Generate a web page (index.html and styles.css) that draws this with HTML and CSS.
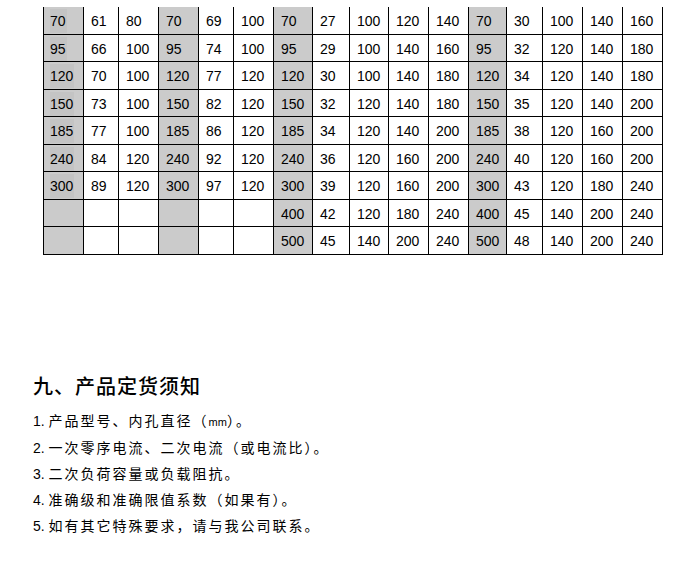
FILE: index.html
```html
<!DOCTYPE html>
<html lang="zh">
<head>
<meta charset="utf-8">
<title>产品定货须知</title>
<link rel="stylesheet" href="styles.css">
</head>
<body>
<div class="page">
  <div class="spec-table">
    <div class="cell key"><span class="mark">70</span></div><div class="cell">61</div><div class="cell">80</div><div class="cell key">70</div><div class="cell">69</div><div class="cell">100</div><div class="cell key">70</div><div class="cell">27</div><div class="cell">100</div><div class="cell">120</div><div class="cell">140</div><div class="cell key">70</div><div class="cell">30</div><div class="cell">100</div><div class="cell">140</div><div class="cell">160</div>
    <div class="cell key"><span class="mark">95</span></div><div class="cell">66</div><div class="cell">100</div><div class="cell key">95</div><div class="cell">74</div><div class="cell">100</div><div class="cell key">95</div><div class="cell">29</div><div class="cell">100</div><div class="cell">140</div><div class="cell">160</div><div class="cell key">95</div><div class="cell">32</div><div class="cell">120</div><div class="cell">140</div><div class="cell">180</div>
    <div class="cell key"><span class="mark">120</span></div><div class="cell">70</div><div class="cell">100</div><div class="cell key">120</div><div class="cell">77</div><div class="cell">120</div><div class="cell key">120</div><div class="cell">30</div><div class="cell">100</div><div class="cell">140</div><div class="cell">180</div><div class="cell key">120</div><div class="cell">34</div><div class="cell">120</div><div class="cell">140</div><div class="cell">180</div>
    <div class="cell key"><span class="mark">150</span></div><div class="cell">73</div><div class="cell">100</div><div class="cell key">150</div><div class="cell">82</div><div class="cell">120</div><div class="cell key">150</div><div class="cell">32</div><div class="cell">120</div><div class="cell">140</div><div class="cell">180</div><div class="cell key">150</div><div class="cell">35</div><div class="cell">120</div><div class="cell">140</div><div class="cell">200</div>
    <div class="cell key"><span class="mark">185</span></div><div class="cell">77</div><div class="cell">100</div><div class="cell key">185</div><div class="cell">86</div><div class="cell">120</div><div class="cell key">185</div><div class="cell">34</div><div class="cell">120</div><div class="cell">140</div><div class="cell">200</div><div class="cell key">185</div><div class="cell">38</div><div class="cell">120</div><div class="cell">160</div><div class="cell">200</div>
    <div class="cell key"><span class="mark">240</span></div><div class="cell">84</div><div class="cell">120</div><div class="cell key">240</div><div class="cell">92</div><div class="cell">120</div><div class="cell key">240</div><div class="cell">36</div><div class="cell">120</div><div class="cell">160</div><div class="cell">200</div><div class="cell key">240</div><div class="cell">40</div><div class="cell">120</div><div class="cell">160</div><div class="cell">200</div>
    <div class="cell key"><span class="mark">300</span></div><div class="cell">89</div><div class="cell">120</div><div class="cell key">300</div><div class="cell">97</div><div class="cell">120</div><div class="cell key">300</div><div class="cell">39</div><div class="cell">120</div><div class="cell">160</div><div class="cell">200</div><div class="cell key">300</div><div class="cell">43</div><div class="cell">120</div><div class="cell">180</div><div class="cell">240</div>
    <div class="cell key"></div><div class="cell"></div><div class="cell"></div><div class="cell key"></div><div class="cell"></div><div class="cell"></div><div class="cell key">400</div><div class="cell">42</div><div class="cell">120</div><div class="cell">180</div><div class="cell">240</div><div class="cell key">400</div><div class="cell">45</div><div class="cell">140</div><div class="cell">200</div><div class="cell">240</div>
    <div class="cell key"></div><div class="cell"></div><div class="cell"></div><div class="cell key"></div><div class="cell"></div><div class="cell"></div><div class="cell key">500</div><div class="cell">45</div><div class="cell">140</div><div class="cell">200</div><div class="cell">240</div><div class="cell key">500</div><div class="cell">48</div><div class="cell">140</div><div class="cell">200</div><div class="cell">240</div>
  </div>

  <h2 class="notice-title">九、产品定货须知</h2>
  <ul class="notice-list">
    <li><span class="num">1. </span>产品型号、内孔直径（<span class="unit">mm</span>）。</li>
    <li><span class="num">2. </span>一次零序电流、二次电流（或电流比）。</li>
    <li><span class="num">3. </span>二次负荷容量或负载阻抗。</li>
    <li><span class="num">4. </span>准确级和准确限值系数（如果有）。</li>
    <li><span class="num">5. </span>如有其它特殊要求，请与我公司联系。</li>
  </ul>
</div>
</body>
</html>
```
FILE: styles.css
```css
html, body {
  margin: 0;
  padding: 0;
  background: #ffffff;
}

.page {
  width: 682px;
  padding-top: 7px;
  font-family: "Liberation Sans", "Noto Sans CJK SC", sans-serif;
  color: #000;
}

.spec-table {
  display: grid;
  grid-template-columns: 39px 34px 39px 39px 34px 39px 38px 36px 38px 39px 39px 37px 35px 39px 39px 39px;
  grid-template-rows: 27px 26px 27px 26px 27px 26px 27px 26px 27px;
  gap: 1px;
  width: max-content;
  margin-left: 43px;
  padding: 0 1px 1px 1px;
  background: #000;
}

.cell {
  background: #fff;
  font-size: 14px;
  line-height: 16px;
  padding: 6px 0 0 7px;
  box-sizing: border-box;
  white-space: nowrap;
}

.cell.key {
  background: #cbcbcb;
}

.mark {
  display: inline-block;
  margin: -4px 0 0 -1px;
  padding: 4px 1px 4px 0;
  background: #c4c4c4;
}

.notice-title {
  margin: 118px 0 0 33px;
  font-family: "Noto Sans CJK SC", sans-serif;
  font-size: 20px;
  line-height: 26px;
  font-weight: 500;
  letter-spacing: 1px;
}

.notice-list {
  list-style: none;
  margin: 9px 0 0 33px;
  padding: 0;
  font-size: 14px;
  line-height: 26px;
  letter-spacing: 2px;
}

.notice-list li {
  font-family: "Liberation Sans", "Noto Sans CJK SC", sans-serif;
}

.num {
  letter-spacing: 0;
}

.unit {
  font-size: 11px;
  letter-spacing: 0;
}
```
